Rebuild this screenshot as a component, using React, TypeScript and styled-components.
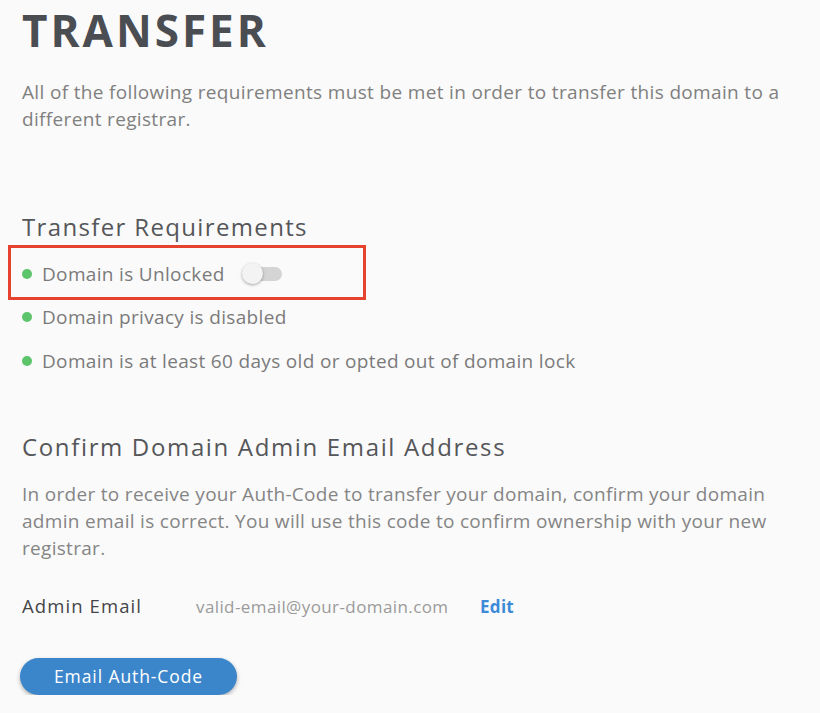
import React from "react";
import styled, { createGlobalStyle } from "styled-components";

const Global = createGlobalStyle`
  html, body { margin: 0; padding: 0; background: #fafafa; }
  body { font-family: "Open Sans", "DejaVu Sans", sans-serif; }
`;

const Page = styled.main`
  padding: 4px 0 0 22px;
  width: 798px;
  box-sizing: border-box;
`;

const Title = styled.h1`
  margin: 0;
  font-weight: 700;
  font-size: 44px;
  line-height: 52px;
  letter-spacing: 3px;
  color: #4a4d52;
`;

const Lead = styled.p`
  margin: 23px 0 0;
  font-size: 19px;
  line-height: 27px;
  letter-spacing: 0.34px;
  color: #808080;
`;

const SectionTitle = styled.h2<{ $gap: number; $spacing: number }>`
  margin: ${(p) => p.$gap}px 0 0;
  font-weight: 400;
  font-size: 24px;
  line-height: 30px;
  letter-spacing: ${(p) => p.$spacing}px;
  color: #555659;
`;

const List = styled.ul`
  list-style: none;
  margin: 10px 0 0;
  padding: 0;
  display: flex;
  flex-direction: column;
`;

const Item = styled.li<{ $highlight?: boolean }>`
  position: relative;
  display: flex;
  align-items: center;
  gap: 10px;
  height: 43.5px;
  font-size: 19px;
  letter-spacing: 0.33px;
  color: #7a7a7a;
  ${(p) =>
    p.$highlight &&
    `
    &::after {
      content: "";
      position: absolute;
      left: -14px;
      top: -7px;
      bottom: -4px;
      width: 358px;
      box-sizing: border-box;
      border: 3px solid #e5432d;
      pointer-events: none;
    }
  `}
`;

const Dot = styled.span`
  width: 10px;
  height: 10px;
  border-radius: 50%;
  background: #5cc46a;
  flex: none;
`;

const Toggle = styled.span`
  position: relative;
  display: inline-block;
  width: 39px;
  height: 14px;
  border-radius: 7px;
  background: #d4d4d4;
  margin-left: 8px;
  &::before {
    content: "";
    position: absolute;
    left: -1px;
    top: -4px;
    width: 21px;
    height: 21px;
    border-radius: 50%;
    background: #f3f3f3;
    box-shadow: 0 1px 3px rgba(0, 0, 0, 0.35);
  }
`;

const Text = styled.p`
  margin: 19px 0 0;
  font-size: 19px;
  line-height: 27px;
  letter-spacing: 0.3px;
  color: #858585;
`;

const FieldRow = styled.div`
  margin-top: 31px;
  display: flex;
  align-items: baseline;
  line-height: 26px;
`;

const FieldLabel = styled.span`
  width: 174px;
  font-size: 18.5px;
  letter-spacing: 1.1px;
  color: #444548;
`;

const FieldValue = styled.span`
  width: 284px;
  font-size: 17px;
  letter-spacing: 0.4px;
  color: #9a9a9a;
`;

const EditLink = styled.a`
  color: #3d8bd8;
  font-weight: 700;
  font-size: 17px;
  letter-spacing: 0.3px;
  text-decoration: none;
`;

const Button = styled.button`
  margin: 38px 0 0 -2px;
  display: block;
  width: 217px;
  height: 37px;
  padding: 0;
  border: none;
  border-radius: 19px;
  background: #3b86cb;
  color: #fff;
  font-family: "Open Sans", sans-serif;
  font-size: 17.5px;
  letter-spacing: 0.9px;
  box-shadow: 0 2px 4px rgba(0, 0, 0, 0.3);
`;

export default function App() {
  return (
    <>
      <Global />
      <Page>
        <Title>TRANSFER</Title>
        <Lead>
          All of the following requirements must be met in order to transfer this domain to a different registrar.
        </Lead>
        <SectionTitle $gap={79} $spacing={1.35}>Transfer Requirements</SectionTitle>
        <List>
          <Item $highlight>
            <Dot />
            Domain is Unlocked
            <Toggle />
          </Item>
          <Item>
            <Dot />
            Domain privacy is disabled
          </Item>
          <Item>
            <Dot />
            Domain is at least 60 days old or opted out of domain lock
          </Item>
        </List>
        <SectionTitle $gap={49} $spacing={1.65}>Confirm Domain Admin Email Address</SectionTitle>
        <Text>
          In order to receive your Auth-Code to transfer your domain, confirm your domain admin email is correct. You will use this code to confirm ownership with your new registrar.
        </Text>
        <FieldRow>
          <FieldLabel>Admin Email</FieldLabel>
          <FieldValue>valid-email@your-domain.com</FieldValue>
          <EditLink href="#">Edit</EditLink>
        </FieldRow>
        <Button>Email Auth-Code</Button>
      </Page>
    </>
  );
}
